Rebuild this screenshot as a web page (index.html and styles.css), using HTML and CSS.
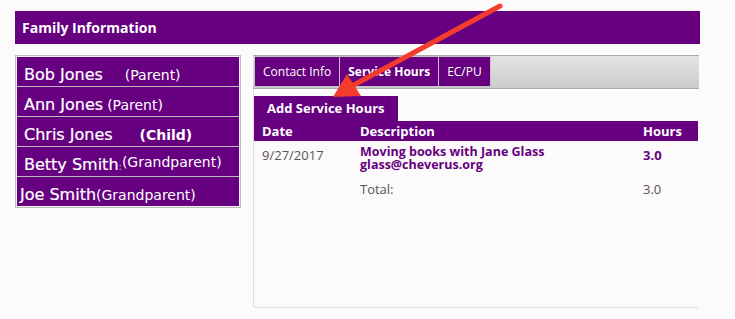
FILE: index.html
```html
<!DOCTYPE html>
<html lang="en">
<head>
    <meta charset="UTF-8">
    <meta name="viewport" content="width=device-width, initial-scale=1.0">
    <title>Family Information</title>
    <link rel="stylesheet" href="styles.css">
</head>
<body>
    <div class="page">
        <div class="section-title">Family Information</div>

        <div class="family-body">
            <ul class="members">
                <li class="member"><span class="name">Bob Jones</span><span class="role gap-md">(Parent)</span></li>
                <li class="member"><span class="name">Ann Jones</span><span class="role gap-sm">(Parent)</span></li>
                <li class="member"><span class="name">Chris Jones</span><span class="role role-bold gap-lg">(Child)</span></li>
                <li class="member"><span class="name">Betty Smith</span><span class="colon">:</span><span class="role raised">(Grandparent)</span></li>
                <li class="member member-tight"><span class="name">Joe Smith</span><span class="role">(Grandparent)</span></li>
            </ul>

            <div class="details">
                <div class="tabbar">
                    <div class="tab">Contact Info</div>
                    <div class="tab active">Service Hours</div>
                    <div class="tab">EC/PU</div>
                </div>
                <div class="panel">
                    <div class="add-btn">Add Service Hours</div>
                    <table class="hours">
                        <thead>
                            <tr>
                                <th class="col-date">Date</th>
                                <th class="col-desc">Description</th>
                                <th>Hours</th>
                            </tr>
                        </thead>
                        <tbody>
                            <tr class="entry">
                                <td class="col-date">9/27/2017</td>
                                <td class="col-desc desc">
                                    <span class="desc-line">Moving books with Jane Glass</span>
                                    <span class="desc-line">glass@cheverus.org</span>
                                </td>
                                <td class="amount">3.0</td>
                            </tr>
                            <tr class="total">
                                <td></td>
                                <td class="col-desc">Total:</td>
                                <td>3.0</td>
                            </tr>
                        </tbody>
                    </table>
                </div>
            </div>
        </div>
    </div>

    <!-- annotation arrow drawn on top of the screenshot -->
    <svg class="annotation" width="735" height="319" viewBox="0 0 735 319">
        <line x1="500" y1="6" x2="352" y2="86" stroke="#f33b2e" stroke-width="5" stroke-linecap="round"/>
        <polygon points="333,97 347,74 361,96" fill="#f33b2e"/>
    </svg>
</body>
</html>
```

FILE: styles.css
```css
body {
    margin: 0;
    background-color: #fcfafa;
    font-family: "Open Sans", "DejaVu Sans", sans-serif;
    color: #555;
}

.page {
    padding: 11px 0 0 15px;
    width: 685px;
}

.section-title {
    height: 33px;
    line-height: 33px;
    padding-left: 7px;
    background-color: #660080;
    color: white;
    font-size: 14px;
    font-weight: bold;
}

.family-body {
    display: flex;
    gap: 12px;
    margin-top: 11px;
    align-items: flex-start;
}

/* left member list */
.members {
    list-style: none;
    margin: 0;
    padding: 1px;
    width: 226px;
    box-sizing: border-box;
    border: 1px solid #bbb;
    background: #f4f4f4;
}

.member {
    display: flex;
    align-items: baseline;
    height: 29px;
    padding: 0 0 0 7px;
    background-color: #660080;
    color: white;
    font-family: "DejaVu Sans", sans-serif;
    white-space: nowrap;
}

.member + .member {
    border-top: 1px solid #bbb;
}

.member-tight {
    padding-left: 3px;
}

.name {
    font-size: 16px;
    line-height: 29px;
    padding-top: 3px;
    -webkit-text-stroke: 0.2px white;
}

.role {
    font-size: 14px;
}

.role-bold {
    font-weight: bold;
}

.gap-sm { margin-left: 4px; }
.gap-md { margin-left: 22px; }
.gap-lg { margin-left: 27px; }

.colon {
    font-size: 10px;
    color: #ccc;
}

.raised {
    position: relative;
    top: -3px;
}

/* right side tabs + panel */
.details {
    width: 446px;
}

.tabbar {
    display: flex;
    height: 32px;
    padding-left: 1px;
    border-top: 1px solid #aaa;
    border-bottom: 1px solid #aaa;
    background: linear-gradient(#e4e4e4, #cbcbcb);
}

.tab {
    height: 29px;
    line-height: 29px;
    padding: 0 8px;
    border: 1px solid #c4c4c4;
    background-color: #660080;
    color: white;
    font-size: 12px;
}

.tab + .tab {
    border-left: none;
}

.tab.active {
    font-weight: bold;
}

.panel {
    width: 445px;
    height: 219px;
    box-sizing: border-box;
    padding-top: 7px;
    border-left: 1px solid #ddd;
    border-bottom: 1px solid #ddd;
    border-bottom-left-radius: 4px;
}

.add-btn {
    display: inline-block;
    height: 25px;
    line-height: 25px;
    padding: 0 13px;
    background-color: #660080;
    color: white;
    font-size: 13px;
    font-weight: bold;
}

.hours {
    width: 444px;
    border-collapse: collapse;
    font-size: 13px;
}

.hours th {
    height: 20px;
    padding: 0;
    background-color: #660080;
    color: white;
    text-align: left;
    font-weight: bold;
}

.hours td {
    padding: 0;
    vertical-align: top;
}

.col-date {
    width: 98px;
    padding-left: 8px !important;
}

.col-desc {
    width: 283px;
}

.entry td {
    padding-top: 5px;
}

.desc {
    color: #660080;
    font-weight: bold;
    font-size: 12.5px;
}

.desc-line {
    display: block;
    line-height: 12.5px;
}

.amount {
    color: #660080;
    font-weight: bold;
}

.total td {
    padding-top: 9px;
}

.annotation {
    position: absolute;
    top: 0;
    left: 0;
    pointer-events: none;
}
```
